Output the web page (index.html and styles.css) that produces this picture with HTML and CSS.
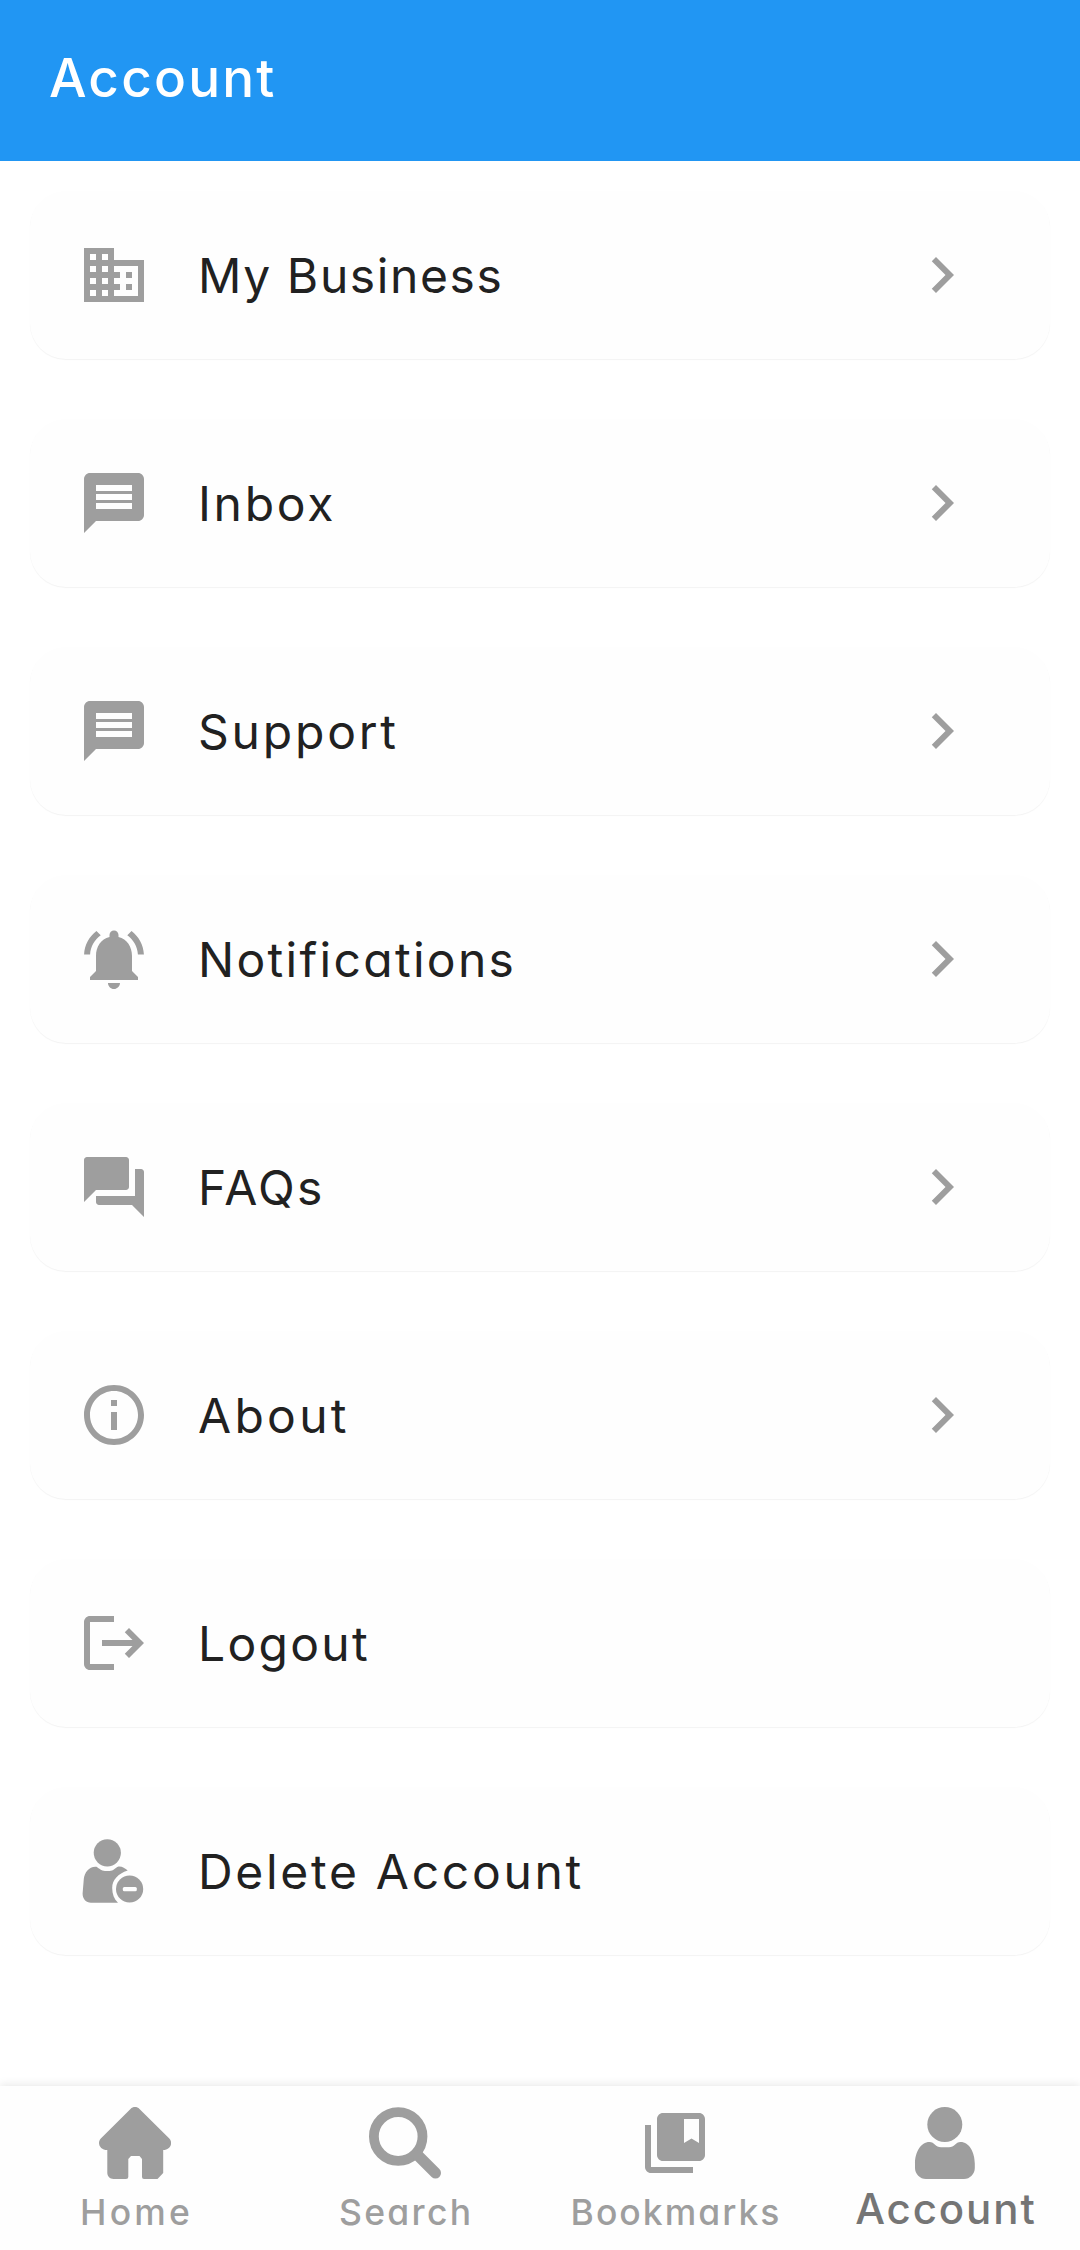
FILE: index.html
```html
<!DOCTYPE html>
<html lang="en">
<head>
<meta charset="utf-8">
<title>Account</title>
<link rel="stylesheet" href="styles.css">
</head>
<body>
<div class="screen">
  <header class="app-bar"><h1 class="title">Account</h1></header>

  <main class="menu">
    <a class="row">
      <svg class="icon" viewBox="0 0 24 24"><path d="M12 7V3H2v18h20V7H12zM6 19H4v-2h2v2zm0-4H4v-2h2v2zm0-4H4V9h2v2zm0-4H4V5h2v2zm4 12H8v-2h2v2zm0-4H8v-2h2v2zm0-4H8V9h2v2zm0-4H8V5h2v2zm10 12h-8v-2h2v-2h-2v-2h2v-2h-2V9h8v10zm-2-8h-2v2h2v-2zm0 4h-2v2h2v-2z"/></svg>
      <span class="label business">My Business</span>
      <svg class="icon chevron" viewBox="0 0 24 24"><path d="M10 6 8.59 7.41 13.17 12l-4.58 4.59L10 18l6-6z"/></svg>
    </a>
    <a class="row">
      <svg class="icon" viewBox="0 0 24 24"><path d="M20 2H4c-1.1 0-1.99.9-1.99 2L2 22l4-4h14c1.1 0 2-.9 2-2V4c0-1.1-.9-2-2-2zm-2 12H6v-2h12v2zm0-3H6V9h12v2zm0-3H6V6h12v2z"/></svg>
      <span class="label inbox">Inbox</span>
      <svg class="icon chevron" viewBox="0 0 24 24"><path d="M10 6 8.59 7.41 13.17 12l-4.58 4.59L10 18l6-6z"/></svg>
    </a>
    <a class="row">
      <svg class="icon" viewBox="0 0 24 24"><path d="M20 2H4c-1.1 0-1.99.9-1.99 2L2 22l4-4h14c1.1 0 2-.9 2-2V4c0-1.1-.9-2-2-2zm-2 12H6v-2h12v2zm0-3H6V9h12v2zm0-3H6V6h12v2z"/></svg>
      <span class="label support">Support</span>
      <svg class="icon chevron" viewBox="0 0 24 24"><path d="M10 6 8.59 7.41 13.17 12l-4.58 4.59L10 18l6-6z"/></svg>
    </a>
    <a class="row">
      <svg class="icon" viewBox="0 0 24 24"><path d="M7.58 4.08 6.15 2.65C3.75 4.48 2.17 7.3 2.03 10.5h2c.15-2.65 1.51-4.97 3.55-6.42zm12.39 6.42h2c-.15-3.2-1.73-6.02-4.12-7.85l-1.42 1.43c2.02 1.45 3.39 3.77 3.54 6.42zM18 11c0-3.07-1.64-5.64-4.5-6.32V4c0-.83-.67-1.5-1.5-1.5s-1.5.67-1.5 1.5v.68C7.63 5.36 6 7.92 6 11v5l-2 2v1h16v-1l-2-2v-5zm-6 11c.14 0 .27-.01.4-.04.65-.14 1.18-.58 1.44-1.18.1-.24.15-.5.15-.78h-4c.01 1.1.9 2 2.01 2z"/></svg>
      <span class="label notifications">Notifications</span>
      <svg class="icon chevron" viewBox="0 0 24 24"><path d="M10 6 8.59 7.41 13.17 12l-4.58 4.59L10 18l6-6z"/></svg>
    </a>
    <a class="row">
      <svg class="icon" viewBox="0 0 24 24"><path d="M21 6h-2v9H6v2c0 .55.45 1 1 1h11l4 4V7c0-.55-.45-1-1-1zm-4 6V3c0-.55-.45-1-1-1H3c-.55 0-1 .45-1 1v14l4-4h10c.55 0 1-.45 1-1z"/></svg>
      <span class="label faqs">FAQs</span>
      <svg class="icon chevron" viewBox="0 0 24 24"><path d="M10 6 8.59 7.41 13.17 12l-4.58 4.59L10 18l6-6z"/></svg>
    </a>
    <a class="row">
      <svg class="icon" viewBox="0 0 24 24"><path d="M11 7h2v2h-2zm0 4h2v6h-2zm1-9C6.48 2 2 6.48 2 12s4.48 10 10 10 10-4.48 10-10S17.52 2 12 2zm0 18c-4.41 0-8-3.59-8-8s3.59-8 8-8 8 3.59 8 8-3.59 8-8 8z"/></svg>
      <span class="label about">About</span>
      <svg class="icon chevron" viewBox="0 0 24 24"><path d="M10 6 8.59 7.41 13.17 12l-4.58 4.59L10 18l6-6z"/></svg>
    </a>
    <a class="row">
      <svg class="icon" viewBox="0 0 24 24"><path d="m17 7-1.41 1.41L18.17 11H8v2h10.17l-2.58 2.58L17 17l5-5zM4 5h8V3H4c-1.1 0-2 .9-2 2v14c0 1.1.9 2 2 2h8v-2H4V5z"/></svg>
      <span class="label logout">Logout</span>
    </a>
    <a class="row">
      <svg class="icon" viewBox="0 0 72 72"><ellipse cx="29.3" cy="17.8" rx="13.6" ry="13.6"/><path d="M18.5 31.7C21.5 33.5 23 35.9 27 35.9H31.5C35.500 35.9 37 33 40.5 31.5C44 31.2 47 33 49.7 35.5C40 38.5 34.2 45 34.2 53C34.2 59 36 64 40 67.7H13C8 67.7 4.6 64 4.6 58.5L5.8 44C6.5 37 11.5 31 18.5 31.7Z"/><circle cx="51.6" cy="54" r="13.6"/><rect class="cutout" x="44.8" y="52" width="14" height="4.2" rx="1.5"/></svg>
      <span class="label delete">Delete Account</span>
    </a>
  </main>

  <nav class="tab-bar">
    <a class="tab">
      <svg class="icon" viewBox="0 0 72 72"><path d="M31.5 2C34-.6 38-.6 40.5 2L70.3 31.5C74.5 36 71 43 64.2 43V66L58.5 72H45Q43 72 43 70V52L40.5 49H32L29.3 52V70Q29.3 72 27 72H14.5C11 72 8.3 69 8.3 66V43C1 43 -2.3 36 1.8 31.5Z"/></svg>
      <span class="tab-label home">Home</span>
    </a>
    <a class="tab">
      <svg class="icon" viewBox="0 0 72 72"><circle class="stroke ring" cx="29.2" cy="29.5" r="24.3"/><path class="stroke handle" d="M49 48.5 66.5 66"/></svg>
      <span class="tab-label search">Search</span>
    </a>
    <a class="tab">
      <svg class="icon" viewBox="0 0 24 24"><path d="M4 6H2v14c0 1.1.9 2 2 2h14v-2H4V6z"/><path d="M20 2H8c-1.1 0-2 .9-2 2v12c0 1.1.9 2 2 2h12c1.1 0 2-.9 2-2V4c0-1.1-.9-2-2-2zm0 10-2.5-1.5L15 12V4h5v8z"/></svg>
      <span class="tab-label bookmarks">Bookmarks</span>
    </a>
    <a class="tab active">
      <svg class="icon" viewBox="0 0 72 72"><circle cx="35.8" cy="17.5" r="17.5"/><path d="M20.5 34.9C25.500 35 26.5 40.2 32 40.2H40C45.5 40.2 46.5 35 51.5 34.9C60 34.8 65.8 45 65.8 56.5V61C65.8 67 61 72 55 72H17C11 72 6 67 6 61V56.5C6 45 12 34.8 20.5 34.9Z"/></svg>
      <span class="tab-label">Account</span>
    </a>
  </nav>
</div>
</body>
</html>
```
FILE: styles.css
```css
* { box-sizing: border-box; }

body {
  margin: 0;
  background: #fff;
  font-family: "Inter", sans-serif;
  font-feature-settings: "cv11";
}

.screen {
  display: flex;
  flex-direction: column;
  width: 1080px;
  height: 2250px;
  overflow: hidden;
}

.app-bar {
  height: 161px;
  padding: 48px 49px 0;
  background: #2196f3;
}

.title {
  margin: 0;
  color: #fff;
  font-size: 53px;
  font-weight: 500;
  line-height: 60px;
  letter-spacing: 2.2px;
}

.menu {
  flex: 1;
  display: flex;
  flex-direction: column;
  gap: 60px;
  padding: 30px 30px 0;
}

.row {
  display: flex;
  align-items: center;
  height: 168px;
  padding: 0 72px 0 48px;
  border-radius: 36px;
  background: #fefefe;
  box-shadow: 0 1px 1px rgba(0, 0, 0, 0.05);
}

.icon {
  width: 72px;
  height: 72px;
  flex: none;
  fill: #9e9e9e;
}

.cutout { fill: #fefefe; }

.label {
  flex: 1;
  padding: 2px 0 0 48px;
  color: #212121;
  font-size: 48px;
  line-height: 60px;
  white-space: nowrap;
}

.business { letter-spacing: 1.6px; }
.inbox { letter-spacing: 2.7px; }
.support { letter-spacing: 2.8px; }
.notifications { letter-spacing: 2.3px; }
.faqs { letter-spacing: 2.3px; }
.about { letter-spacing: 3.3px; }
.logout { letter-spacing: 2.3px; }
.delete { letter-spacing: 2.7px; }

.tab-bar {
  display: grid;
  grid-template-columns: repeat(4, 1fr);
  height: 164px;
  background: #fefefe;
  box-shadow: 0 -1px 9px rgba(0, 0, 0, 0.1);
}

.tab {
  display: flex;
  flex-direction: column;
  align-items: center;
  padding-top: 21px;
}

.tab-label {
  margin-top: 12px;
  color: #9e9e9e;
  font-size: 35.500px;
  font-weight: 500;
  line-height: 44px;
  white-space: nowrap;
}

.home { padding-left: 3.2px; letter-spacing: 3.2px; }
.search { padding-left: 2.3px; letter-spacing: 2.3px; }
.bookmarks { padding-left: 2px; letter-spacing: 2px; }

.active .tab-label {
  margin-top: 4px;
  padding-left: 1.9px;
  color: #757575;
  font-size: 42px;
  line-height: 52px;
  letter-spacing: 1.9px;
}

.stroke { fill: none; stroke: #9e9e9e; }
.ring { stroke-width: 9.8px; }
.handle { stroke-width: 11px; stroke-linecap: round; }
```
